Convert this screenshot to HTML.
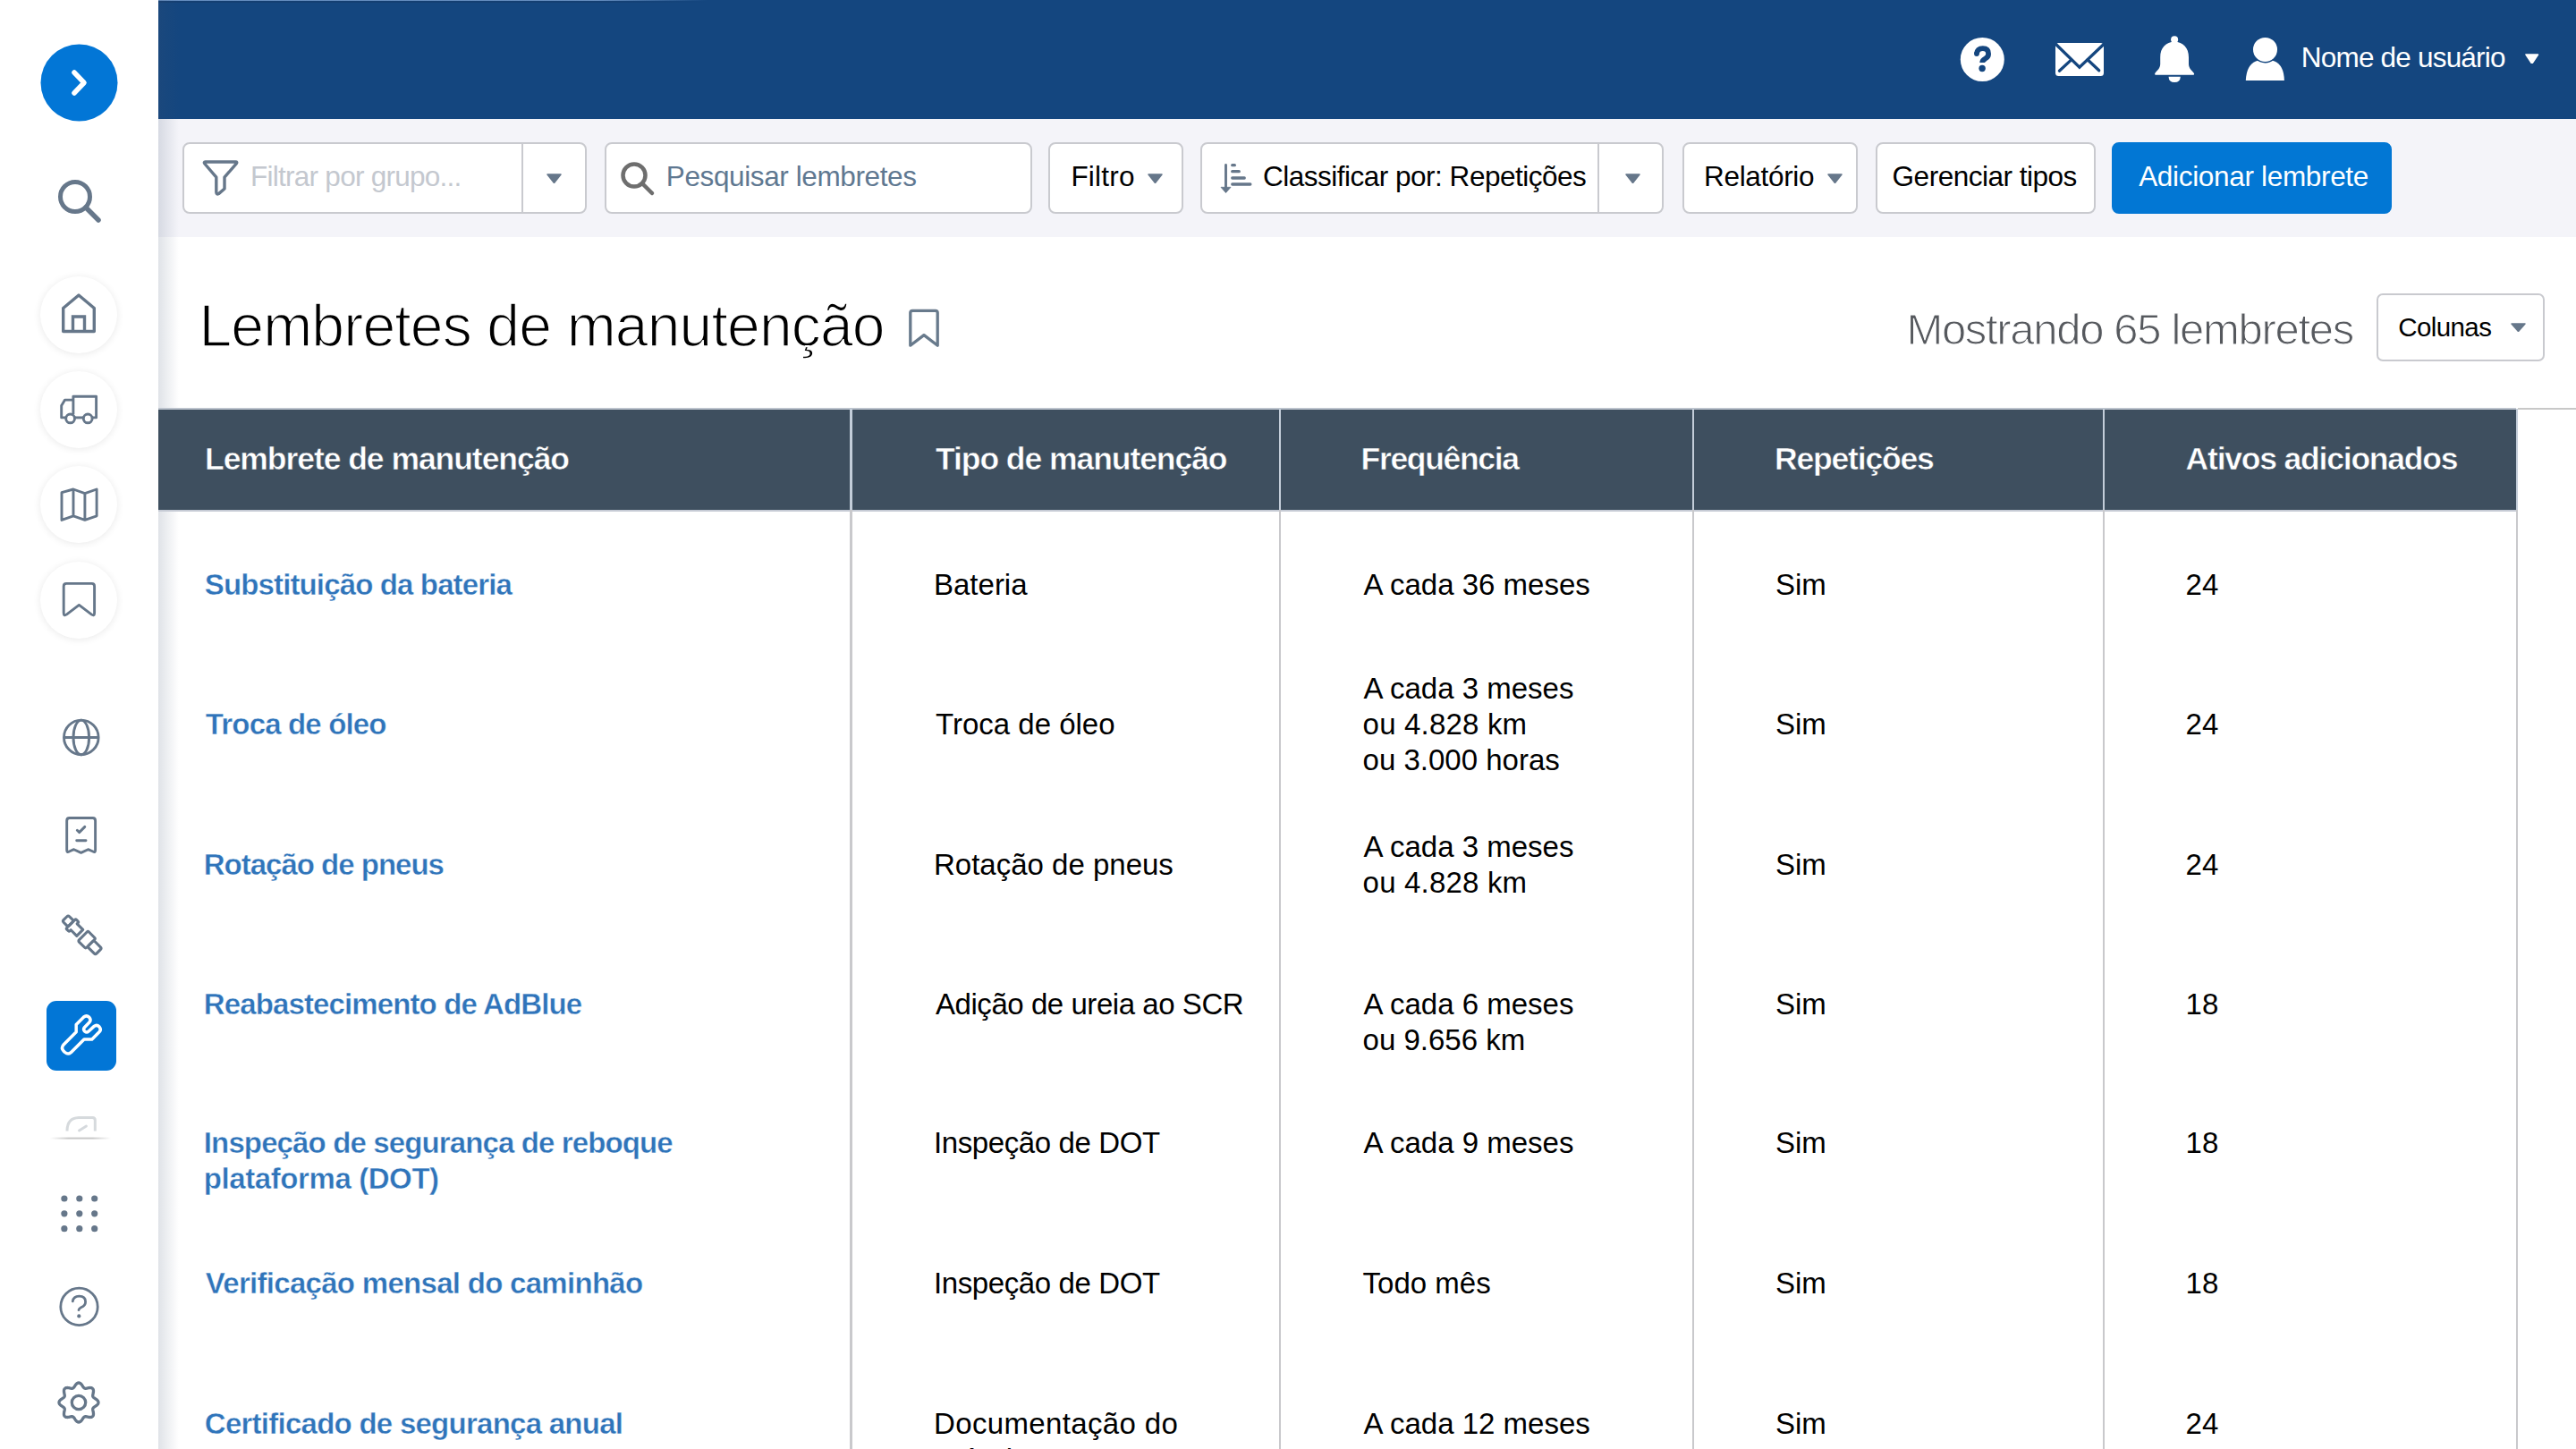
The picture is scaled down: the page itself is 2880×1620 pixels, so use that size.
<!DOCTYPE html>
<html><head><meta charset="utf-8"><style>
html,body{margin:0;padding:0;width:2880px;height:1620px;overflow:hidden;background:#fff;font-family:"Liberation Sans",sans-serif}
.a{position:absolute;display:block}
.t{position:absolute;white-space:nowrap}
</style></head><body>
<div class="a" style="left:177px;top:0px;width:2703px;height:1620px;background:#fff;"></div><div class="a" style="left:177px;top:0px;width:2703px;height:133px;background:#14467f;"></div><div class="a" style="left:177px;top:0px;width:613px;height:1px;background:linear-gradient(to right, rgba(110,150,200,0.9), rgba(110,150,200,0.9) 80%, rgba(110,150,200,0));"></div><div class="a" style="left:177px;top:1px;width:613px;height:2px;background:linear-gradient(to right, rgba(20,50,90,0.35), rgba(20,50,90,0.35) 80%, rgba(20,50,90,0));"></div><div class="a" style="left:177px;top:133px;width:2703px;height:132px;background:#f4f4f9;"></div><div class="a" style="left:177px;top:0px;width:23px;height:1620px;background:linear-gradient(to right, rgba(60,80,110,0.16), rgba(60,80,110,0.0));"></div><div class="a" style="left:0px;top:0px;width:177px;height:1620px;background:#fff;"></div><div class="a" style="left:204px;top:159px;width:452px;height:80px;border-radius:8px;background:#fff;border:2px solid #c9cacf;box-sizing:border-box"></div><div class="a" style="left:583px;top:160px;width:2px;height:78px;background:#c9cacf;"></div><div class="a" style="left:676px;top:159px;width:478px;height:80px;border-radius:8px;background:#fff;border:2px solid #c9cacf;box-sizing:border-box"></div><div class="a" style="left:1172px;top:159px;width:151px;height:80px;border-radius:8px;background:#fff;border:2px solid #c9cacf;box-sizing:border-box"></div><div class="a" style="left:1342px;top:159px;width:518px;height:80px;border-radius:8px;background:#fff;border:2px solid #c9cacf;box-sizing:border-box"></div><div class="a" style="left:1786px;top:160px;width:2px;height:78px;background:#c9cacf;"></div><div class="a" style="left:1881px;top:159px;width:196px;height:80px;border-radius:8px;background:#fff;border:2px solid #c9cacf;box-sizing:border-box"></div><div class="a" style="left:2097px;top:159px;width:246px;height:80px;border-radius:8px;background:#fff;border:2px solid #c9cacf;box-sizing:border-box"></div><div class="a" style="left:2361px;top:159px;width:313px;height:80px;border-radius:8px;background:#0277d4;border:2px solid #0277d4;box-sizing:border-box"></div><svg class="a" style="left:611px;top:194px" width="17" height="11" viewBox="0 0 17 11"><path d="M1 1 L16 1 L8.5 10.5 Z" fill="#66778a" stroke="#66778a" stroke-width="1.5" stroke-linejoin="round"/></svg><svg class="a" style="left:1283px;top:194px" width="17" height="11" viewBox="0 0 17 11"><path d="M1 1 L16 1 L8.5 10.5 Z" fill="#66778a" stroke="#66778a" stroke-width="1.5" stroke-linejoin="round"/></svg><svg class="a" style="left:1817px;top:194px" width="17" height="11" viewBox="0 0 17 11"><path d="M1 1 L16 1 L8.5 10.5 Z" fill="#66778a" stroke="#66778a" stroke-width="1.5" stroke-linejoin="round"/></svg><svg class="a" style="left:2043px;top:194px" width="17" height="11" viewBox="0 0 17 11"><path d="M1 1 L16 1 L8.5 10.5 Z" fill="#66778a" stroke="#66778a" stroke-width="1.5" stroke-linejoin="round"/></svg><svg class="a" style="left:224px;top:177px" width="44" height="44" viewBox="0 0 44 44"><path d="M5.5 4 H39.5 Q41.5 4 40.3 5.8 L27 21.2 V34 L20.5 39.6 Q18 41 17.8 38 V21.2 L4.8 6 Q3.6 4 5.5 4 Z" fill="none" stroke="#66778a" stroke-width="3.4" stroke-linejoin="round"/></svg><svg class="a" style="left:692px;top:179px" width="42" height="42" viewBox="0 0 42 42"><circle cx="17" cy="17" r="12.5" fill="none" stroke="#6e6e6e" stroke-width="4.5"/><path d="M26 26 L37 37" stroke="#6e6e6e" stroke-width="4.5" stroke-linecap="round"/></svg><svg class="a" style="left:1362px;top:180px" width="42" height="40" viewBox="0 0 42 40"><path d="M8.5 4.5 V31" stroke="#66778a" stroke-width="2.9" stroke-linecap="round"/><path d="M3 29.3 L14 29.3 L8.5 35.6 Z" fill="#66778a" stroke="#66778a" stroke-width="0.8" stroke-linejoin="round"/><rect x="14.1" y="3.05" width="5.90" height="3.3" rx="1.65" fill="#66778a"/><rect x="14.1" y="10.05" width="10.80" height="3.3" rx="1.65" fill="#66778a"/><rect x="14.1" y="17.35" width="16.80" height="3.3" rx="1.65" fill="#66778a"/><rect x="14.1" y="24.35" width="23.40" height="3.3" rx="1.65" fill="#66778a"/></svg><svg class="a" style="left:1013px;top:343px" width="40" height="48" viewBox="0 0 40 48"><path d="M4.8 6.5 V43.2 L20 31.6 L35.2 43.2 V6.5 Q35.2 4.4 33 4.4 H7 Q4.8 4.4 4.8 6.5 Z" fill="none" stroke="#687a8c" stroke-width="3.3" stroke-linejoin="round"/></svg><div class="a" style="left:2657px;top:328px;width:188px;height:76px;border-radius:7px;background:#fff;border:2px solid #c9cacf;box-sizing:border-box"></div><svg class="a" style="left:2807px;top:361px" width="17" height="10" viewBox="0 0 17 10"><path d="M1 1 L16 1 L8.5 9.5 Z" fill="#66778a" stroke="#66778a" stroke-width="1.5" stroke-linejoin="round"/></svg><div class="a" style="left:2815px;top:456px;width:65px;height:2px;background:#c8c8c8;"></div><div class="a" style="left:177px;top:456px;width:2636px;height:2px;background:#bcc3cd;"></div><div class="a" style="left:177px;top:458px;width:2636px;height:112px;background:#3e4f5f;"></div><div class="a" style="left:177px;top:570px;width:2636px;height:2px;background:#c6cbd5;"></div><div class="a" style="left:950px;top:457px;width:3px;height:113px;background:#c3cdd9;"></div><div class="a" style="left:950px;top:570px;width:3px;height:1050px;background:#c9c9cc;"></div><div class="a" style="left:1430px;top:457px;width:2px;height:113px;background:#c3cdd9;"></div><div class="a" style="left:1430px;top:570px;width:2px;height:1050px;background:#c9c9cc;"></div><div class="a" style="left:1892px;top:457px;width:2px;height:113px;background:#c3cdd9;"></div><div class="a" style="left:1892px;top:570px;width:2px;height:1050px;background:#c9c9cc;"></div><div class="a" style="left:2351px;top:457px;width:2px;height:113px;background:#c3cdd9;"></div><div class="a" style="left:2351px;top:570px;width:2px;height:1050px;background:#c9c9cc;"></div><div class="a" style="left:2813px;top:457px;width:2px;height:113px;background:#c3cdd9;"></div><div class="a" style="left:2813px;top:570px;width:2px;height:1050px;background:#c9c9cc;"></div><svg class="a" style="left:2190px;top:40px" width="54" height="54" viewBox="0 0 54 54"><circle cx="26.3" cy="26.5" r="24.5" fill="#fff"/><path d="M19.9 20.2 Q20.6 14.2 26.8 14.2 Q33.1 14.2 33.1 20.2 Q33.1 23.6 29.6 25.6 Q26.2 27.4 26.2 30" fill="none" stroke="#14467f" stroke-width="5.8" stroke-linecap="butt" stroke-linejoin="round"/><circle cx="19.95" cy="20.1" r="2.9" fill="#14467f"/><circle cx="26.1" cy="36.5" r="3.7" fill="#14467f"/></svg><svg class="a" style="left:2296px;top:46px" width="58" height="42" viewBox="0 0 58 42"><rect x="2" y="2" width="54" height="37" rx="3.5" fill="#fff"/><path d="M1.5 2.5 L28.9 29.2 L56.5 3" fill="none" stroke="#14467f" stroke-width="3.3" stroke-linejoin="miter"/><path d="M6.4 33.2 L19.2 21.4 M50.7 32.8 L38 20.8" stroke="#14467f" stroke-width="3.3" stroke-linecap="round"/></svg><svg class="a" style="left:2406px;top:38px" width="52" height="56" viewBox="0 0 52 56"><circle cx="25.1" cy="6.2" r="4" fill="#fff"/><path d="M25.1 8.8 C15.5 8.8 9.2 15.5 9.2 26 V33.5 C9.2 38.5 5.5 41 3.6 43.4 C2.4 45 3.2 45.8 5 45.8 H45.2 C47 45.8 47.8 45 46.6 43.4 C44.7 41 41 38.5 41 33.5 V26 C41 15.5 34.7 8.8 25.1 8.8 Z" fill="#fff"/><path d="M18.5 47.7 H31.8 Q31.5 54 25.1 54 Q18.8 54 18.5 47.7 Z" fill="#fff"/></svg><svg class="a" style="left:2508px;top:40px" width="50" height="53" viewBox="0 0 50 53"><path d="M2.8 50.1 Q3.5 33 14 28.5 Q24.5 24 35 28.5 Q45.5 33 45.9 50.1 Z" fill="#fff"/><circle cx="24.5" cy="15.4" r="15" fill="#14467f"/><circle cx="24.5" cy="15.4" r="13.5" fill="#fff"/></svg><svg class="a" style="left:2823.3px;top:59.5px" width="15.5" height="11.8" viewBox="0 0 15.5 11.8"><path d="M1 1 L14.5 1 L7.75 11.3 Z" fill="#fff" stroke="#fff" stroke-width="1.5" stroke-linejoin="round"/></svg><svg class="a" style="left:44px;top:49px" width="90" height="90" viewBox="0 0 90 90"><circle cx="44.5" cy="43.5" r="43" fill="#0276d6"/><path d="M39 32 L50 43.5 L39 55" fill="none" stroke="#fff" stroke-width="5.5" stroke-linecap="round" stroke-linejoin="round"/></svg><svg class="a" style="left:62px;top:198px" width="54" height="54" viewBox="0 0 54 54"><circle cx="22" cy="22" r="16.5" fill="none" stroke="#66778a" stroke-width="5"/><path d="M34 34 L48 48" stroke="#66778a" stroke-width="5.5" stroke-linecap="round"/></svg><div class="a" style="left:45px;top:309px;width:86px;height:86px;border-radius:50%;background:#fff;box-shadow:0 1px 9px rgba(0,0,0,0.09)"></div><div class="a" style="left:45px;top:415px;width:86px;height:86px;border-radius:50%;background:#fff;box-shadow:0 1px 9px rgba(0,0,0,0.09)"></div><div class="a" style="left:45px;top:521px;width:86px;height:86px;border-radius:50%;background:#fff;box-shadow:0 1px 9px rgba(0,0,0,0.09)"></div><div class="a" style="left:45px;top:627.5px;width:86px;height:86px;border-radius:50%;background:#fff;box-shadow:0 1px 9px rgba(0,0,0,0.09)"></div><svg class="a" style="left:66px;top:326px" width="46" height="48" viewBox="0 0 46 48"><path d="M4.7 44.5 V18.5 L22 4 L39.3 18.5 V44.5 Z" fill="none" stroke="#66778a" stroke-width="3.4" stroke-linejoin="round"/><path d="M15.5 44.5 V28 H28.5 V44.5" fill="none" stroke="#66778a" stroke-width="3.4"/></svg><svg class="a" style="left:65px;top:440px" width="48" height="38" viewBox="0 0 48 38"><g fill="none" stroke="#66778a" stroke-width="2.9" stroke-linejoin="round"><path d="M16.9 22.9 V3.3 H42.6 V26.9 H38.1"/><path d="M8.8 26.9 H3.7 V13.6 L7.6 7.1 H16.9"/><path d="M18.4 26.9 H28.3"/><circle cx="13.6" cy="27.9" r="4.9"/><circle cx="33.2" cy="27.9" r="4.9"/></g></svg><svg class="a" style="left:65px;top:544px" width="46" height="42" viewBox="0 0 46 42"><path d="M4 6.7 L17 3 L29.9 7.6 L43.1 3 V32.8 L29.9 37.4 L17 32.8 L4 37.4 Z M17 3 V32.8 M29.9 7.6 V37.4" fill="none" stroke="#66778a" stroke-width="2.9" stroke-linejoin="round"/></svg><svg class="a" style="left:67px;top:648px" width="44" height="45" viewBox="0 0 44 45"><path d="M4.2 7.4 V37.3 Q4.2 41.2 7.6 38.9 L21.4 28.4 L35.2 38.9 Q38.6 41.2 38.6 37.3 V7.4 Q38.6 4.4 35.6 4.4 H7.2 Q4.2 4.4 4.2 7.4 Z" fill="none" stroke="#66778a" stroke-width="2.9" stroke-linejoin="round"/></svg><svg class="a" style="left:67px;top:800px" width="48" height="48" viewBox="0 0 48 48"><circle cx="23.8" cy="24.4" r="19.3" fill="none" stroke="#66778a" stroke-width="2.9"/><ellipse cx="23.8" cy="24.4" rx="8.8" ry="19.3" fill="none" stroke="#66778a" stroke-width="2.9"/><path d="M4.5 24.5 H43.1" stroke="#66778a" stroke-width="2.9"/></svg><svg class="a" style="left:70px;top:910px" width="42" height="48" viewBox="0 0 42 48"><path d="M4.7 40.5 V7.5 Q4.7 4.5 7.7 4.5 H33.6 Q36.6 4.5 36.6 7.5 V40.5 Q36.6 43.5 34 42 L28.5 39.7 L20.6 43.4 L12.6 39.7 L7.3 42 Q4.7 43.5 4.7 40.5 Z" fill="none" stroke="#66778a" stroke-width="2.9" stroke-linejoin="round"/><path d="M16.3 18.2 L18.6 20.6 L24.8 14.4" fill="none" stroke="#66778a" stroke-width="2.9" stroke-linecap="round" stroke-linejoin="round"/><path d="M15.7 29.8 H26" stroke="#66778a" stroke-width="2.9" stroke-linecap="round"/></svg><svg class="a" style="left:61px;top:1015px" width="60" height="60" viewBox="0 0 60 60"><g transform="translate(31.8,31.4) rotate(-45) scale(1.0)" fill="none" stroke="#66778a" stroke-width="3.1" stroke-linejoin="round"><rect x="-4.6" y="-28" width="9.2" height="8.8" rx="2"/><path d="M-6.3 -19.2 H6.3 Q7.6 -19.2 7.6 -17.9 V-15.6 Q7.6 -14.3 6.3 -14.3 H4.9 V-5 H-4.9 V-14.3 H-6.3 Q-7.6 -14.3 -7.6 -15.6 V-17.9 Q-7.6 -19.2 -6.3 -19.2 Z"/><rect x="-7.8" y="0" width="15.6" height="12" rx="1.6"/><rect x="-5" y="12" width="10" height="12.6" rx="2"/></g></svg><div class="a" style="left:52px;top:1119px;width:78px;height:78px;border-radius:11px;background:#0276d6"></div><svg class="a" style="left:50px;top:1115px" width="85" height="85" viewBox="0 0 85 85"><path d="M35.2 30.5 L43.7 22 Q46.8 19.6 49.8 22.4 Q52.4 25.4 49.9 28 L44.6 33.4 Q42.6 35.9 44.6 38 Q46.9 40 49.1 38 L55.2 32.4 Q58.2 30 61.1 33 Q63.5 36 61.2 38.5 L52.8 46.9 H44 L29.3 61.7 Q26 64.5 22.6 61.5 L21 59.9 Q18.1 56.5 20.8 53.3 L35.2 38.7 Z" fill="none" stroke="#fff" stroke-width="3.5" stroke-linejoin="round"/></svg><svg class="a" style="left:50px;top:1230px" width="80" height="60" viewBox="0 0 80 60"><defs><linearGradient id="fg" x1="0" x2="1"><stop offset="0" stop-color="#c8c8c8" stop-opacity="0"/><stop offset="0.3" stop-color="#c8c8c8"/><stop offset="0.7" stop-color="#c8c8c8"/><stop offset="1" stop-color="#c8c8c8" stop-opacity="0"/></linearGradient></defs><path d="M25 34.5 Q25 20 38 19.5 H53.5 Q56.3 19.5 56.3 22.5 V34.5" fill="none" stroke="#cfd3d7" stroke-width="3" opacity="0.85"/><path d="M38.5 34 L46.5 29" stroke="#d5d9dd" stroke-width="2.8" stroke-linecap="round"/><rect x="6" y="41.6" width="68" height="2" fill="url(#fg)"/></svg><svg class="a" style="left:67.6px;top:1335.9px" width="44" height="44" viewBox="0 0 44 44"><circle cx="3.9" cy="4.00" r="3.6" fill="#66778a"/><circle cx="20.8" cy="4.00" r="3.6" fill="#66778a"/><circle cx="37.7" cy="4.00" r="3.6" fill="#66778a"/><circle cx="3.9" cy="20.85" r="3.6" fill="#66778a"/><circle cx="20.8" cy="20.85" r="3.6" fill="#66778a"/><circle cx="37.7" cy="20.85" r="3.6" fill="#66778a"/><circle cx="3.9" cy="37.70" r="3.6" fill="#66778a"/><circle cx="20.8" cy="37.70" r="3.6" fill="#66778a"/><circle cx="37.7" cy="37.70" r="3.6" fill="#66778a"/></svg><svg class="a" style="left:64px;top:1436px" width="50" height="50" viewBox="0 0 50 50"><circle cx="24.5" cy="24.9" r="20.7" fill="none" stroke="#66778a" stroke-width="2.8"/><path d="M17.3 18.9 Q18.2 13.2 24.5 13.2 Q31.6 13.2 31.6 19.4 Q31.6 23.3 27 25.6 Q24.2 27 24 28.6" fill="none" stroke="#66778a" stroke-width="2.8" stroke-linecap="round"/><circle cx="24.3" cy="35.4" r="2.1" fill="#66778a"/></svg><svg class="a" style="left:63.4px;top:1543.4px" width="50" height="50" viewBox="0 0 50 50"><path d="M25.00 3.00 L25.69 3.09 L26.36 3.34 L27.01 3.75 L27.62 4.28 L28.18 4.91 L28.70 5.60 L29.18 6.31 L29.62 7.01 L30.04 7.65 L30.46 8.21 L30.88 8.66 L31.34 8.99 L31.84 9.20 L32.40 9.28 L33.02 9.27 L33.71 9.16 L34.46 9.01 L35.26 8.83 L36.10 8.66 L36.96 8.54 L37.80 8.50 L38.61 8.55 L39.35 8.72 L40.01 9.02 L40.56 9.44 L40.98 9.99 L41.28 10.65 L41.45 11.39 L41.50 12.20 L41.46 13.04 L41.34 13.90 L41.17 14.74 L40.99 15.54 L40.84 16.29 L40.73 16.98 L40.72 17.60 L40.80 18.16 L41.01 18.66 L41.34 19.12 L41.79 19.54 L42.35 19.96 L42.99 20.38 L43.69 20.82 L44.40 21.30 L45.09 21.82 L45.72 22.38 L46.25 22.99 L46.66 23.64 L46.91 24.31 L47.00 25.00 L46.91 25.69 L46.66 26.36 L46.25 27.01 L45.72 27.62 L45.09 28.18 L44.40 28.70 L43.69 29.18 L42.99 29.62 L42.35 30.04 L41.79 30.46 L41.34 30.88 L41.01 31.34 L40.80 31.84 L40.72 32.40 L40.73 33.02 L40.84 33.71 L40.99 34.46 L41.17 35.26 L41.34 36.10 L41.46 36.96 L41.50 37.80 L41.45 38.61 L41.28 39.35 L40.98 40.01 L40.56 40.56 L40.01 40.98 L39.35 41.28 L38.61 41.45 L37.80 41.50 L36.96 41.46 L36.10 41.34 L35.26 41.17 L34.46 40.99 L33.71 40.84 L33.02 40.73 L32.40 40.72 L31.84 40.80 L31.34 41.01 L30.88 41.34 L30.46 41.79 L30.04 42.35 L29.62 42.99 L29.18 43.69 L28.70 44.40 L28.18 45.09 L27.62 45.72 L27.01 46.25 L26.36 46.66 L25.69 46.91 L25.00 47.00 L24.31 46.91 L23.64 46.66 L22.99 46.25 L22.38 45.72 L21.82 45.09 L21.30 44.40 L20.82 43.69 L20.38 42.99 L19.96 42.35 L19.54 41.79 L19.12 41.34 L18.66 41.01 L18.16 40.80 L17.60 40.72 L16.98 40.73 L16.29 40.84 L15.54 40.99 L14.74 41.17 L13.90 41.34 L13.04 41.46 L12.20 41.50 L11.39 41.45 L10.65 41.28 L9.99 40.98 L9.44 40.56 L9.02 40.01 L8.72 39.35 L8.55 38.61 L8.50 37.80 L8.54 36.96 L8.66 36.10 L8.83 35.26 L9.01 34.46 L9.16 33.71 L9.27 33.02 L9.28 32.40 L9.20 31.84 L8.99 31.34 L8.66 30.88 L8.21 30.46 L7.65 30.04 L7.01 29.62 L6.31 29.18 L5.60 28.70 L4.91 28.18 L4.28 27.62 L3.75 27.01 L3.34 26.36 L3.09 25.69 L3.00 25.00 L3.09 24.31 L3.34 23.64 L3.75 22.99 L4.28 22.38 L4.91 21.82 L5.60 21.30 L6.31 20.82 L7.01 20.38 L7.65 19.96 L8.21 19.54 L8.66 19.12 L8.99 18.66 L9.20 18.16 L9.28 17.60 L9.27 16.98 L9.16 16.29 L9.01 15.54 L8.83 14.74 L8.66 13.90 L8.54 13.04 L8.50 12.20 L8.55 11.39 L8.72 10.65 L9.02 9.99 L9.44 9.44 L9.99 9.02 L10.65 8.72 L11.39 8.55 L12.20 8.50 L13.04 8.54 L13.90 8.66 L14.74 8.83 L15.54 9.01 L16.29 9.16 L16.98 9.27 L17.60 9.28 L18.16 9.20 L18.66 8.99 L19.12 8.66 L19.54 8.21 L19.96 7.65 L20.38 7.01 L20.82 6.31 L21.30 5.60 L21.82 4.91 L22.38 4.28 L22.99 3.75 L23.64 3.34 L24.31 3.09 Z" fill="none" stroke="#66778a" stroke-width="3.3" stroke-linejoin="round"/><circle cx="25" cy="25" r="7.7" fill="none" stroke="#66778a" stroke-width="3.3"/></svg>
<div class="t" id="user" style="left:2572.80px;top:48.84px;font-size:31.5px;line-height:31.5px;color:#fff;font-weight:400;letter-spacing:-0.800px;">Nome de usuário</div>
<div class="t" id="tb1" style="left:280.00px;top:182.34px;font-size:31.5px;line-height:31.5px;color:#c4c8cf;font-weight:400;letter-spacing:-0.737px;">Filtrar por grupo...</div>
<div class="t" id="tb2" style="left:744.80px;top:182.34px;font-size:31.5px;line-height:31.5px;color:#5f7891;font-weight:400;letter-spacing:-0.389px;">Pesquisar lembretes</div>
<div class="t" id="tb3" style="left:1197.40px;top:182.34px;font-size:31.5px;line-height:31.5px;color:#000;font-weight:400;letter-spacing:0.240px;">Filtro</div>
<div class="t" id="tb4" style="left:1412.00px;top:182.34px;font-size:31.5px;line-height:31.5px;color:#000;font-weight:400;letter-spacing:-0.496px;">Classificar por: Repetições</div>
<div class="t" id="tb5" style="left:1905.00px;top:182.34px;font-size:31.5px;line-height:31.5px;color:#000;font-weight:400;letter-spacing:-0.312px;">Relatório</div>
<div class="t" id="tb6" style="left:2115.60px;top:182.34px;font-size:31.5px;line-height:31.5px;color:#000;font-weight:400;letter-spacing:-0.493px;">Gerenciar tipos</div>
<div class="t" id="tb7" style="left:2391.20px;top:182.34px;font-size:31.5px;line-height:31.5px;color:#fff;font-weight:400;letter-spacing:-0.324px;">Adicionar lembrete</div>
<div class="t" id="title" style="left:222.40px;top:330.63px;font-size:66px;line-height:66px;color:#000;font-weight:400;letter-spacing:-0.818px;-webkit-text-stroke:1.6px #fff">Lembretes de manutenção</div>
<div class="t" id="count" style="left:2131.40px;top:344.22px;font-size:49px;line-height:49px;color:#56595e;font-weight:400;letter-spacing:-1.314px;-webkit-text-stroke:1.1px #fff">Mostrando 65 lembretes</div>
<div class="t" id="cols" style="left:2681.20px;top:350.93px;font-size:29.5px;line-height:29.5px;color:#000;font-weight:400;letter-spacing:-0.583px;">Colunas</div>
<div class="t" id="h1" style="left:229.00px;top:496.05px;font-size:35.5px;line-height:35.5px;color:#fff;font-weight:700;letter-spacing:-1.048px;-webkit-text-stroke:0.5px #3e4f5f">Lembrete de manutenção</div>
<div class="t" id="h2" style="left:1046.00px;top:496.05px;font-size:35.5px;line-height:35.5px;color:#fff;font-weight:700;letter-spacing:-1.059px;-webkit-text-stroke:0.5px #3e4f5f">Tipo de manutenção</div>
<div class="t" id="h3" style="left:1521.60px;top:496.05px;font-size:35.5px;line-height:35.5px;color:#fff;font-weight:700;letter-spacing:-1.333px;-webkit-text-stroke:0.5px #3e4f5f">Frequência</div>
<div class="t" id="h4" style="left:1984.00px;top:496.05px;font-size:35.5px;line-height:35.5px;color:#fff;font-weight:700;letter-spacing:-1.178px;-webkit-text-stroke:0.5px #3e4f5f">Repetições</div>
<div class="t" id="h5" style="left:2443.60px;top:496.05px;font-size:35.5px;line-height:35.5px;color:#fff;font-weight:700;letter-spacing:-1.206px;-webkit-text-stroke:0.5px #3e4f5f">Ativos adicionados</div>
<div class="t" id="r0c1l0" style="left:228.80px;top:636.57px;font-size:33px;line-height:33px;color:#2f74ba;font-weight:700;letter-spacing:-0.864px;-webkit-text-stroke:0.4px #fff">Substituição da bateria</div>
<div class="t" id="r0c2l0" style="left:1044.00px;top:636.57px;font-size:33px;line-height:33px;color:#000;font-weight:400;letter-spacing:0.000px;">Bateria</div>
<div class="t" id="r0c3l0" style="left:1524.60px;top:636.57px;font-size:33px;line-height:33px;color:#000;font-weight:400;letter-spacing:0.000px;">A cada 36 meses</div>
<div class="t" id="r0c4" style="left:1985.00px;top:636.57px;font-size:33px;line-height:33px;color:#000;font-weight:400;letter-spacing:0.000px;">Sim</div>
<div class="t" id="r0c5" style="left:2443.60px;top:636.57px;font-size:33px;line-height:33px;color:#000;font-weight:400;letter-spacing:0.000px;">24</div>
<div class="t" id="r1c1l0" style="left:229.80px;top:793.07px;font-size:33px;line-height:33px;color:#2f74ba;font-weight:700;letter-spacing:-0.833px;-webkit-text-stroke:0.4px #fff">Troca de óleo</div>
<div class="t" id="r1c2l0" style="left:1046.00px;top:793.07px;font-size:33px;line-height:33px;color:#000;font-weight:400;letter-spacing:0.000px;">Troca de óleo</div>
<div class="t" id="r1c3l0" style="left:1524.60px;top:753.07px;font-size:33px;line-height:33px;color:#000;font-weight:400;letter-spacing:0.000px;">A cada 3 meses</div>
<div class="t" id="r1c3l1" style="left:1523.60px;top:793.07px;font-size:33px;line-height:33px;color:#000;font-weight:400;letter-spacing:0.190px;">ou 4.828 km</div>
<div class="t" id="r1c3l2" style="left:1523.60px;top:833.07px;font-size:33px;line-height:33px;color:#000;font-weight:400;letter-spacing:0.000px;">ou 3.000 horas</div>
<div class="t" id="r1c4" style="left:1985.00px;top:793.07px;font-size:33px;line-height:33px;color:#000;font-weight:400;letter-spacing:0.000px;">Sim</div>
<div class="t" id="r1c5" style="left:2443.60px;top:793.07px;font-size:33px;line-height:33px;color:#000;font-weight:400;letter-spacing:0.000px;">24</div>
<div class="t" id="r2c1l0" style="left:227.80px;top:949.57px;font-size:33px;line-height:33px;color:#2f74ba;font-weight:700;letter-spacing:-1.007px;-webkit-text-stroke:0.4px #fff">Rotação de pneus</div>
<div class="t" id="r2c2l0" style="left:1044.00px;top:949.57px;font-size:33px;line-height:33px;color:#000;font-weight:400;letter-spacing:0.000px;">Rotação de pneus</div>
<div class="t" id="r2c3l0" style="left:1524.60px;top:929.57px;font-size:33px;line-height:33px;color:#000;font-weight:400;letter-spacing:0.000px;">A cada 3 meses</div>
<div class="t" id="r2c3l1" style="left:1523.60px;top:969.57px;font-size:33px;line-height:33px;color:#000;font-weight:400;letter-spacing:0.190px;">ou 4.828 km</div>
<div class="t" id="r2c4" style="left:1985.00px;top:949.57px;font-size:33px;line-height:33px;color:#000;font-weight:400;letter-spacing:0.000px;">Sim</div>
<div class="t" id="r2c5" style="left:2443.60px;top:949.57px;font-size:33px;line-height:33px;color:#000;font-weight:400;letter-spacing:0.000px;">24</div>
<div class="t" id="r3c1l0" style="left:227.80px;top:1106.07px;font-size:33px;line-height:33px;color:#2f74ba;font-weight:700;letter-spacing:-0.879px;-webkit-text-stroke:0.4px #fff">Reabastecimento de AdBlue</div>
<div class="t" id="r3c2l0" style="left:1046.00px;top:1106.07px;font-size:33px;line-height:33px;color:#000;font-weight:400;letter-spacing:-0.448px;">Adição de ureia ao SCR</div>
<div class="t" id="r3c3l0" style="left:1524.60px;top:1106.07px;font-size:33px;line-height:33px;color:#000;font-weight:400;letter-spacing:0.000px;">A cada 6 meses</div>
<div class="t" id="r3c3l1" style="left:1523.60px;top:1146.07px;font-size:33px;line-height:33px;color:#000;font-weight:400;letter-spacing:0.000px;">ou 9.656 km</div>
<div class="t" id="r3c4" style="left:1985.00px;top:1106.07px;font-size:33px;line-height:33px;color:#000;font-weight:400;letter-spacing:0.000px;">Sim</div>
<div class="t" id="r3c5" style="left:2443.60px;top:1106.07px;font-size:33px;line-height:33px;color:#000;font-weight:400;letter-spacing:0.000px;">18</div>
<div class="t" id="r4c1l0" style="left:227.80px;top:1261.07px;font-size:33px;line-height:33px;color:#2f74ba;font-weight:700;letter-spacing:-0.874px;-webkit-text-stroke:0.4px #fff">Inspeção de segurança de reboque</div>
<div class="t" id="r4c1l1" style="left:227.80px;top:1301.07px;font-size:33px;line-height:33px;color:#2f74ba;font-weight:700;letter-spacing:-0.413px;-webkit-text-stroke:0.4px #fff">plataforma (DOT)</div>
<div class="t" id="r4c2l0" style="left:1044.00px;top:1261.07px;font-size:33px;line-height:33px;color:#000;font-weight:400;letter-spacing:-0.393px;">Inspeção de DOT</div>
<div class="t" id="r4c3l0" style="left:1524.60px;top:1261.07px;font-size:33px;line-height:33px;color:#000;font-weight:400;letter-spacing:0.000px;">A cada 9 meses</div>
<div class="t" id="r4c4" style="left:1985.00px;top:1261.07px;font-size:33px;line-height:33px;color:#000;font-weight:400;letter-spacing:0.000px;">Sim</div>
<div class="t" id="r4c5" style="left:2443.60px;top:1261.07px;font-size:33px;line-height:33px;color:#000;font-weight:400;letter-spacing:0.000px;">18</div>
<div class="t" id="r5c1l0" style="left:229.80px;top:1418.07px;font-size:33px;line-height:33px;color:#2f74ba;font-weight:700;letter-spacing:-0.707px;-webkit-text-stroke:0.4px #fff">Verificação mensal do caminhão</div>
<div class="t" id="r5c2l0" style="left:1044.00px;top:1418.07px;font-size:33px;line-height:33px;color:#000;font-weight:400;letter-spacing:-0.393px;">Inspeção de DOT</div>
<div class="t" id="r5c3l0" style="left:1523.60px;top:1418.07px;font-size:33px;line-height:33px;color:#000;font-weight:400;letter-spacing:0.000px;">Todo mês</div>
<div class="t" id="r5c4" style="left:1985.00px;top:1418.07px;font-size:33px;line-height:33px;color:#000;font-weight:400;letter-spacing:0.000px;">Sim</div>
<div class="t" id="r5c5" style="left:2443.60px;top:1418.07px;font-size:33px;line-height:33px;color:#000;font-weight:400;letter-spacing:0.000px;">18</div>
<div class="t" id="r6c1l0" style="left:228.80px;top:1574.57px;font-size:33px;line-height:33px;color:#2f74ba;font-weight:700;letter-spacing:-0.741px;-webkit-text-stroke:0.4px #fff">Certificado de segurança anual</div>
<div class="t" id="r6c2l0" style="left:1044.00px;top:1574.57px;font-size:33px;line-height:33px;color:#000;font-weight:400;letter-spacing:0.357px;">Documentação do</div>
<div class="t" id="r6c2l1" style="left:1044.00px;top:1614.57px;font-size:33px;line-height:33px;color:#000;font-weight:400;letter-spacing:0.357px;">veículo</div>
<div class="t" id="r6c3l0" style="left:1524.60px;top:1574.57px;font-size:33px;line-height:33px;color:#000;font-weight:400;letter-spacing:0.000px;">A cada 12 meses</div>
<div class="t" id="r6c4" style="left:1985.00px;top:1574.57px;font-size:33px;line-height:33px;color:#000;font-weight:400;letter-spacing:0.000px;">Sim</div>
<div class="t" id="r6c5" style="left:2443.60px;top:1574.57px;font-size:33px;line-height:33px;color:#000;font-weight:400;letter-spacing:0.000px;">24</div>
</body></html>
